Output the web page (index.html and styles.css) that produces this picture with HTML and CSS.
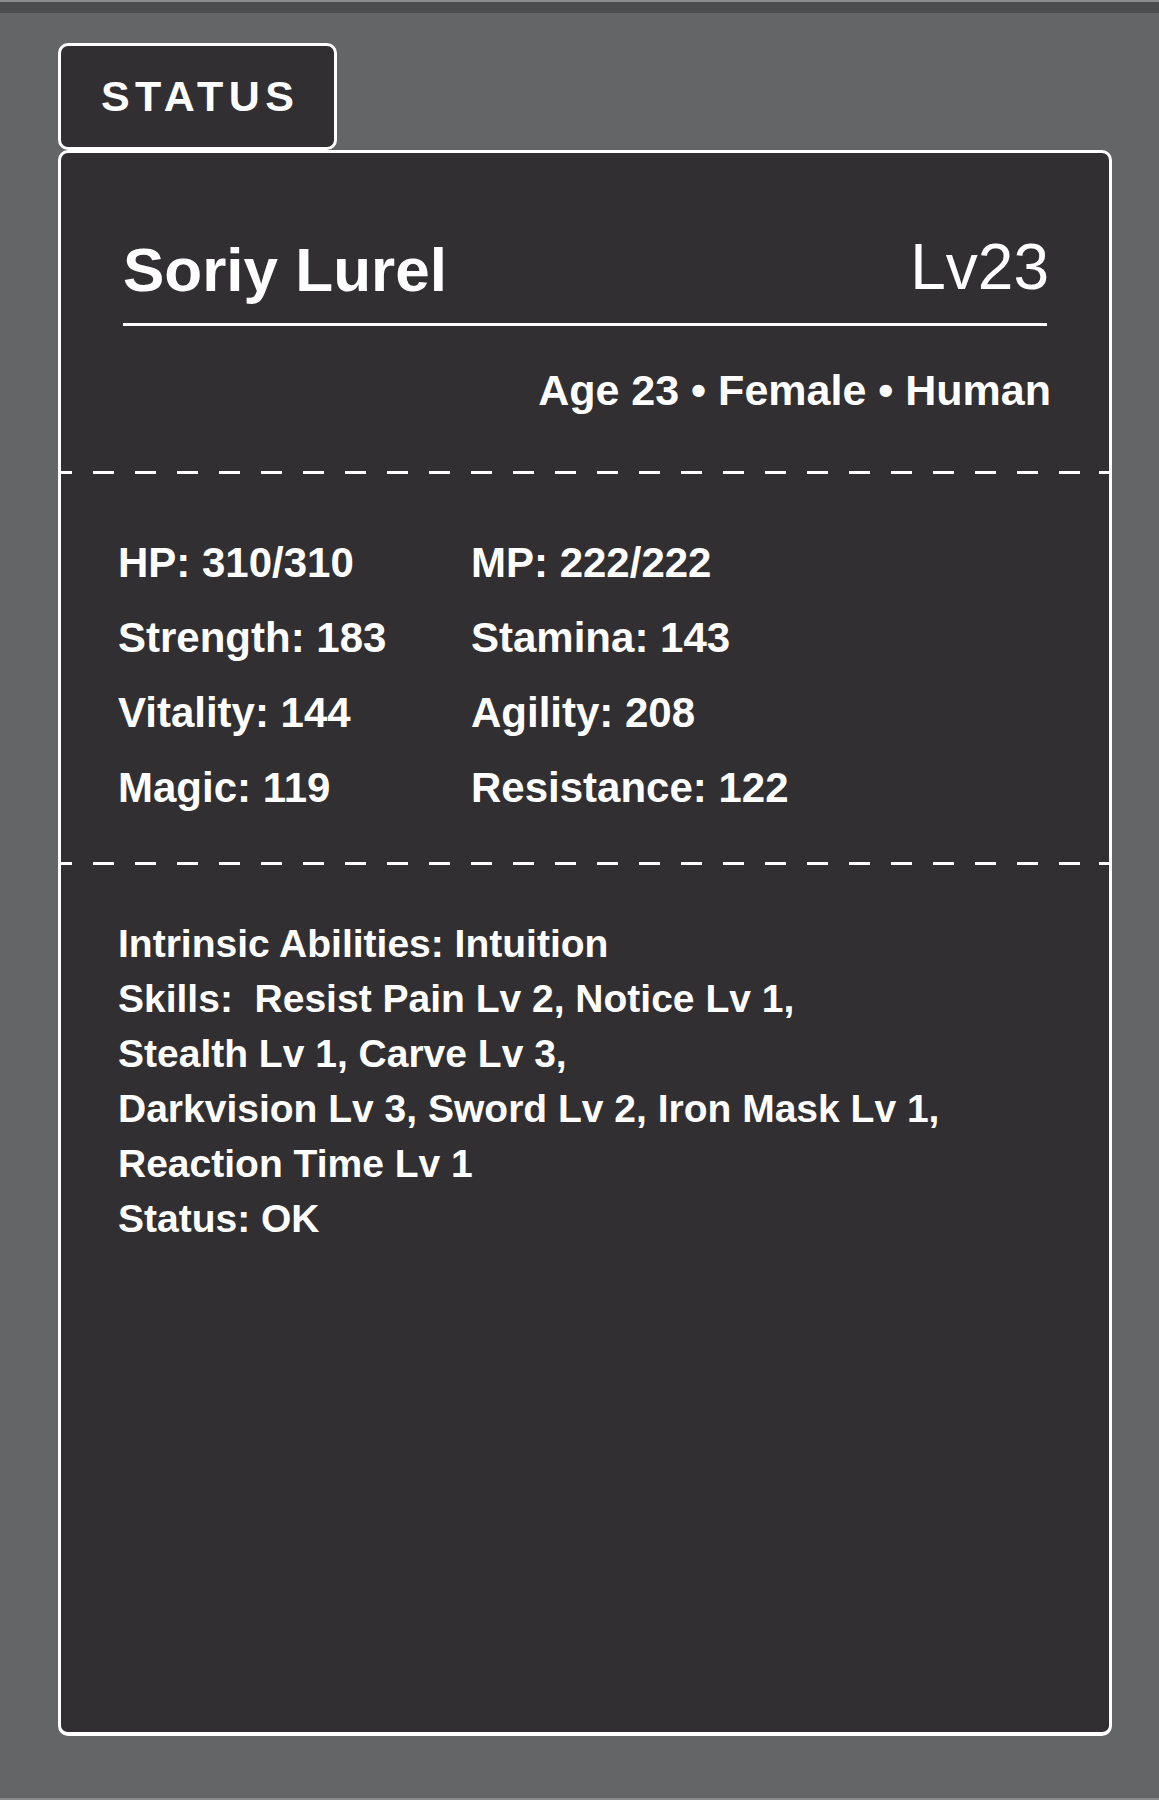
FILE: index.html
```html
<!DOCTYPE html>
<html lang="en">
<head>
<meta charset="utf-8">
<title>Status</title>
<link rel="stylesheet" href="styles.css">
</head>
<body>
<div class="page">
  <div class="topbar"></div>
  <main class="sheet">
    <div class="tab"><span class="tab-label">STATUS</span></div>
    <section class="card">
      <header class="card-head">
        <div class="name-row">
          <h1 class="name">Soriy Lurel</h1>
          <div class="level">Lv23</div>
        </div>
      </header>
      <p class="bio">Age 23 • Female • Human</p>
      <div class="dash dash-first"></div>
      <div class="stats">
        <div class="stat">HP: 310/310</div>
        <div class="stat">MP: 222/222</div>
        <div class="stat">Strength: 183</div>
        <div class="stat">Stamina: 143</div>
        <div class="stat">Vitality: 144</div>
        <div class="stat">Agility: 208</div>
        <div class="stat">Magic: 119</div>
        <div class="stat">Resistance: 122</div>
      </div>
      <div class="dash dash-second"></div>
      <div class="abilities">
        <div class="line">Intrinsic Abilities: Intuition</div>
        <div class="line">Skills:&nbsp; Resist Pain Lv 2, Notice Lv 1,</div>
        <div class="line">Stealth Lv 1, Carve Lv 3,</div>
        <div class="line">Darkvision Lv 3, Sword Lv 2, Iron Mask Lv 1,</div>
        <div class="line">Reaction Time Lv 1</div>
        <div class="line">Status: OK</div>
      </div>
    </section>
  </main>
  <div class="bottomline"></div>
</div>
</body>
</html>
```

FILE: styles.css
```css
* { box-sizing: border-box; }

html, body {
  margin: 0;
  padding: 0;
  background: #646567;
}

body {
  font-family: "Liberation Sans", Arial, Helvetica, sans-serif;
  color: #ffffff;
}

.page {
  min-height: 1800px;
  display: flex;
  flex-direction: column;
}

.topbar {
  height: 13px;
  background: #4c4d4f;
  border-top: 2px solid #8a8b8d;
}

.sheet {
  padding: 30px 0 0 58px;
  display: flex;
  flex-direction: column;
  align-items: flex-start;
}

.tab {
  width: 279px;
  height: 107px;
  background: #312f32;
  border: 3px solid #ffffff;
  border-radius: 10px;
  display: flex;
  align-items: center;
  justify-content: center;
}

.tab-label {
  font-weight: 700;
  font-size: 43px;
  line-height: 1;
  letter-spacing: 5.5px;
  margin-right: -5.5px;
}

.card {
  width: 1054px;
  height: 1586px;
  background: #312f32;
  border: 3px solid #ffffff;
  border-bottom-width: 4px;
  border-radius: 10px;
}

.card-head {
  padding: 82px 62px 0 62px;
}

.name-row {
  display: flex;
  justify-content: space-between;
  align-items: flex-end;
  padding-bottom: 22px;
  border-bottom: 3px solid #ffffff;
}

.name {
  margin: 0;
  font-size: 62px;
  font-weight: 700;
  line-height: 1;
}

.level {
  font-size: 64px;
  font-weight: 400;
  line-height: 1;
  margin-bottom: 2px;
  margin-right: -2px;
}

.bio {
  margin: 43px 58px 0 0;
  text-align: right;
  font-size: 43px;
  font-weight: 700;
  line-height: 1;
}

.dash {
  height: 3px;
  background: repeating-linear-gradient(90deg, #ffffff 0 21px, transparent 21px 42px);
  background-position: -10px 0;
}

.dash-first { margin-top: 59px; }

.stats {
  display: grid;
  grid-template-columns: 353px 1fr;
  padding: 51px 0 0 57px;
}

.stat {
  font-size: 42px;
  font-weight: 700;
  line-height: 75px;
  white-space: nowrap;
}

.dash-second { margin-top: 37px; }

.abilities {
  padding: 51px 0 0 57px;
}

.line {
  font-size: 39px;
  font-weight: 700;
  line-height: 55px;
  white-space: nowrap;
}

.bottomline {
  margin-top: auto;
  height: 2px;
  background: #8a8b8d;
}
```
